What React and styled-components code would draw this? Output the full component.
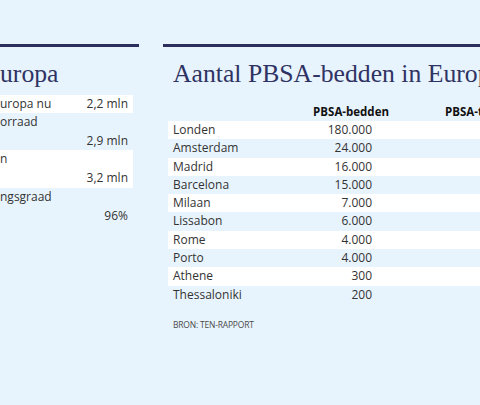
import React from 'react';
import styled, { createGlobalStyle } from 'styled-components';

const Global = createGlobalStyle`
  html, body { margin: 0; padding: 0; background: #e8f4fd; }
  body { font-family: "Open Sans", "Noto Sans", sans-serif; color: #333; }
`;

const Page = styled.div`
  width: 480px;
  height: 405px;
  overflow: hidden;
  display: flex;
  gap: 24px;
  padding-top: 44px;
  box-sizing: border-box;
`;

const Panel = styled.section`
  flex: 0 0 ${(p) => p.$w}px;
  border-top: 3px solid #2c2e5c;
`;

const Title = styled.h2`
  margin: 0;
  padding: 12px 0 0 ${(p) => p.$indent || 0}px;
  font-family: "Liberation Serif", "DejaVu Serif", serif;
  font-weight: normal;
  font-size: 25.7px;
  line-height: 30px;
  color: #2f3363;
  white-space: nowrap;
`;

const StatList = styled.div`
  margin: 6px 6px 0 0;
`;

const StatRow = styled.div`
  display: grid;
  grid-template-columns: ${(p) => (p.$stacked ? '1fr' : '1fr auto')};
  background: ${(p) => (p.$alt ? '#ffffff' : 'transparent')};
  padding-right: 5px;
  font-size: 12px;
  line-height: ${(p) => (p.$stacked ? '18.7px' : '18px')};
  white-space: nowrap;
`;

const StatLabel = styled.span`
  overflow: hidden;
`;

const StatValue = styled.span`
  justify-self: end;
  text-align: right;
`;

const Table = styled.div`
  margin: 14px 0 0 5px;
  width: 470px;
`;

const Row = styled.div`
  display: grid;
  grid-template-columns: 120px 101px 1fr;
  height: 18.3px;
  line-height: 18.3px;
  font-size: 12px;
  background: ${(p) => (p.$alt ? '#ffffff' : 'transparent')};
  white-space: nowrap;
`;

const HeadRow = styled(Row)`
  height: 18px;
  line-height: 18px;
  font-size: 11.5px;
  font-weight: 700;
  color: #111;
  background: transparent;
`;

const Cell = styled.span`
  padding-left: ${(p) => p.$pl || 0}px;
  padding-right: ${(p) => p.$pr || 0}px;
  text-align: ${(p) => (p.$right ? 'right' : 'left')};
  overflow: hidden;
`;

const Source = styled.p`
  margin: 15px 0 0 10px;
  font-size: 8.5px;
  line-height: 12px;
  letter-spacing: -0.2px;
  color: #4a4a4a;
  text-transform: uppercase;
`;

const stats = [
  { label: 'uropa nu', value: '2,2 mln' },
  { label: 'orraad', value: '2,9 mln', stacked: true },
  { label: 'n', value: '3,2 mln', stacked: true },
  { label: 'ngsgraad', value: '96%', stacked: true },
];

const cities = [
  ['Londen', '180.000'],
  ['Amsterdam', '24.000'],
  ['Madrid', '16.000'],
  ['Barcelona', '15.000'],
  ['Milaan', '7.000'],
  ['Lissabon', '6.000'],
  ['Rome', '4.000'],
  ['Porto', '4.000'],
  ['Athene', '300'],
  ['Thessaloniki', '200'],
];

export default function App() {
  return (
    <>
      <Global />
      <Page>
        <Panel $w={139}>
          <Title>uropa</Title>
          <StatList>
            {stats.map((s, i) => (
              <StatRow key={i} $alt={i % 2 === 0} $stacked={s.stacked}>
                <StatLabel>{s.label}</StatLabel>
                <StatValue>{s.value}</StatValue>
              </StatRow>
            ))}
          </StatList>
        </Panel>
        <Panel $w={480}>
          <Title $indent={10}>Aantal PBSA-bedden in Europa</Title>
          <Table>
            <HeadRow>
              <Cell />
              <Cell $right>PBSA-bedden</Cell>
              <Cell $pl={56}>PBSA-tekort</Cell>
            </HeadRow>
            {cities.map(([city, beds], i) => (
              <Row key={city} $alt={i % 2 === 0}>
                <Cell $pl={5}>{city}</Cell>
                <Cell $right $pr={17}>{beds}</Cell>
                <Cell />
              </Row>
            ))}
          </Table>
          <Source>Bron: TEN-rapport</Source>
        </Panel>
      </Page>
    </>
  );
}
